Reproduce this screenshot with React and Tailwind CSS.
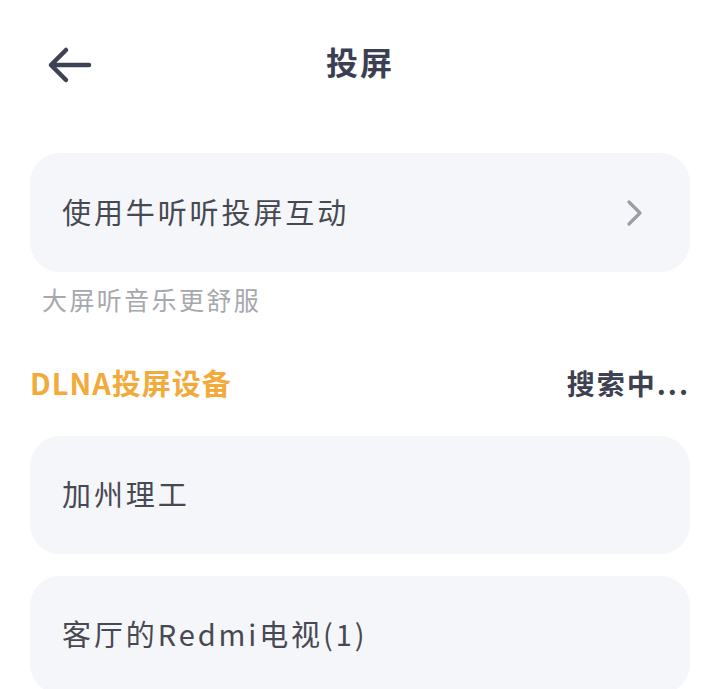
import React from "react";

const ArrowLeft = () => (
  <svg width="46" height="38" viewBox="0 0 46 38" fill="none">
    <path
      d="M43 19H5M20 4L5 19l15 15"
      stroke="#3d4254"
      strokeWidth="4.5"
      strokeLinecap="round"
      strokeLinejoin="round"
    />
  </svg>
);

const Chevron = () => (
  <svg width="20" height="28" viewBox="0 0 20 28" fill="none">
    <path
      d="M5 3l11 11L5 25"
      stroke="#9b9da5"
      strokeWidth="3.2"
      strokeLinecap="round"
      strokeLinejoin="round"
    />
  </svg>
);

const Card = ({ children, right, className = "" }) => (
  <div
    className={`shrink-0 mx-[30px] rounded-[30px] bg-[#f5f6fa] flex items-center justify-between pl-[32px] pr-[46px] ${className}`}
  >
    <span className="pb-[3px] text-[29px] tracking-[2.9px] text-[#474952] leading-none">
      {children}
    </span>
    {right}
  </div>
);

export default function App() {
  return (
    <div
      className="w-[720px] h-[689px] overflow-hidden bg-white flex flex-col"
      style={{ fontFamily: '"Noto Sans CJK SC", "Noto Sans", sans-serif' }}
    >
      <div className="shrink-0 h-[128px] grid grid-cols-[1fr_auto_1fr] items-center">
        <div className="pl-[46px] pt-[2px]">
          <ArrowLeft />
        </div>
        <h1 className="pb-[6px] text-[32px] font-bold tracking-[2px] text-[#3a3f52] leading-none">
          投屏
        </h1>
        <div />
      </div>

      <Card className="mt-[25px] h-[119px]" right={<Chevron />}>
        使用牛听听投屏互动
      </Card>
      <p className="shrink-0 mt-[12px] pl-[42px] text-[25px] tracking-[2.4px] text-[#a7a8ad] leading-[30px]">
        大屏听音乐更舒服
      </p>

      <div className="shrink-0 mt-[54px] mx-[30px] flex items-center justify-between leading-none">
        <span className="text-[29px] font-bold text-[#f2aa3a] tracking-[1px]">
          DLNA投屏设备
        </span>
        <span className="text-[28px] font-bold text-[#3d4150] tracking-[2px]">
          搜索中...
        </span>
      </div>

      <Card className="mt-[39px] h-[118px]">加州理工</Card>
      <Card className="mt-[22px] h-[118px]">客厅的Redmi电视(1)</Card>
    </div>
  );
}
